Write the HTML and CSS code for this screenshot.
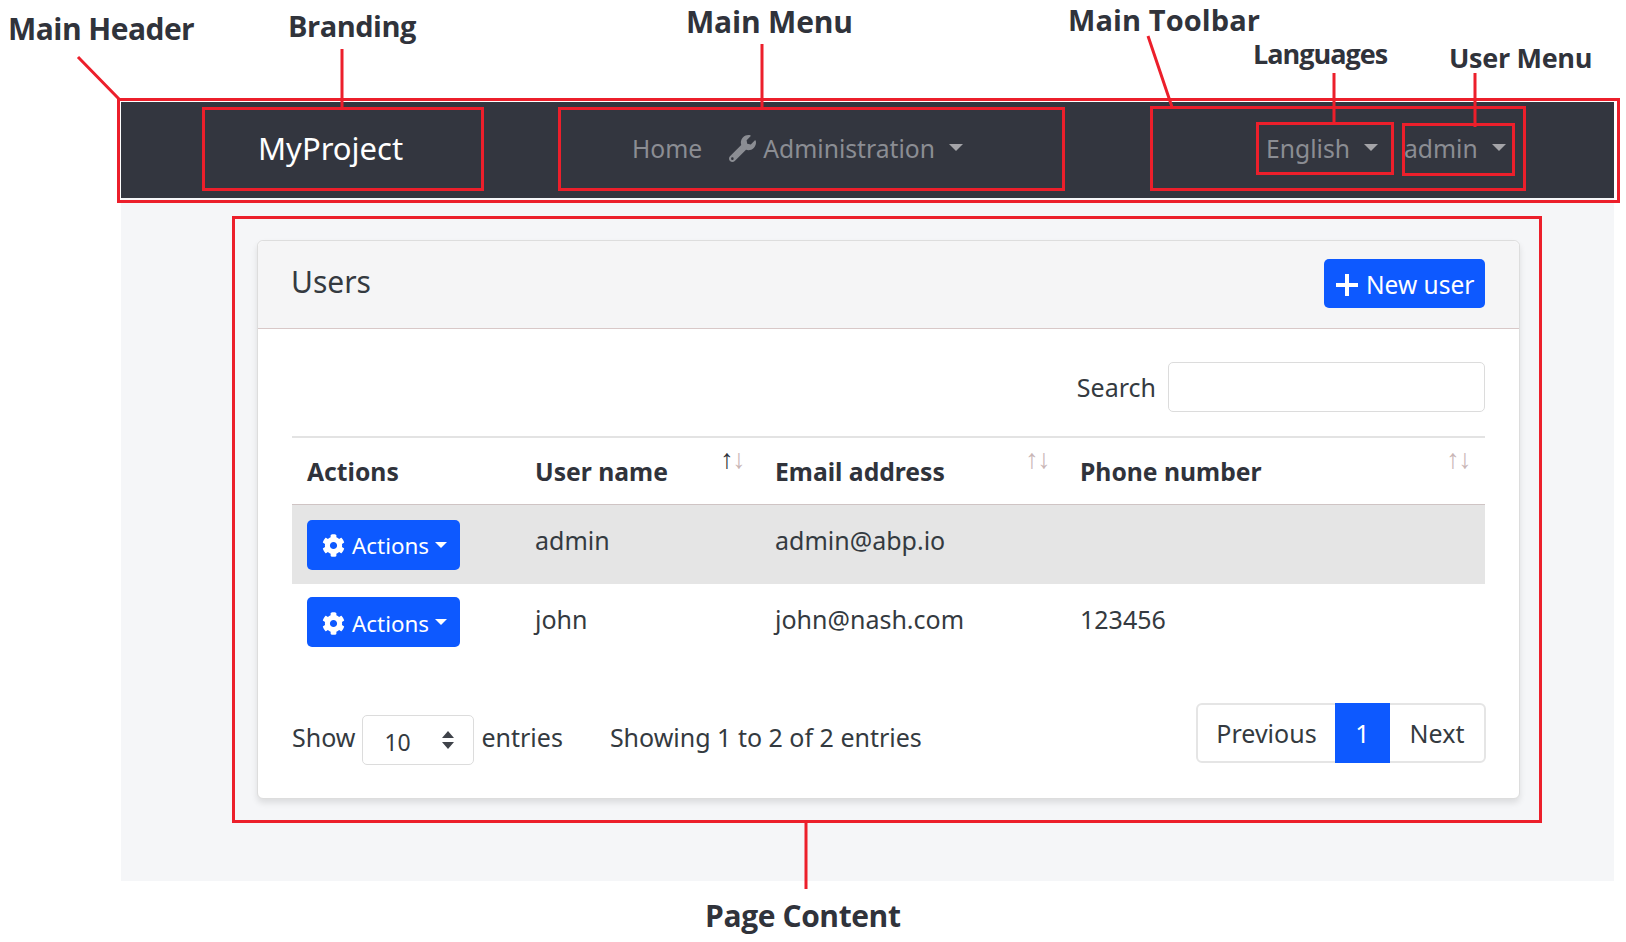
FILE: index.html
```html
<!DOCTYPE html>
<html lang="en">
<head>
<meta charset="utf-8">
<title>Users</title>
<link rel="stylesheet" href="styles.css">
</head>
<body>
<div class="canvas">
  <div class="app">
    <header class="navbar">
      <a class="brand">MyProject</a>
      <nav class="menu">
        <a class="nav-link">Home</a>
        <a class="nav-link admin">
          <svg class="wrench" viewBox="0 0 512 512"><path d="M507.73 109.1c-2.24-9.03-13.54-12.09-20.12-5.51l-74.36 74.36-67.88-11.31-11.31-67.88 74.36-74.36c6.62-6.62 3.43-17.9-5.66-20.16-47.38-11.74-99.55.91-136.58 37.93-39.64 39.64-50.55 97.1-34.05 147.2L18.74 402.76c-24.99 24.99-24.99 65.51 0 90.5 24.99 24.99 65.51 24.99 90.5 0l213.21-213.21c50.12 16.71 107.47 5.68 147.37-34.22 37.07-37.07 49.7-89.32 37.91-136.73zM64 472c-13.25 0-24-10.75-24-24 0-13.26 10.75-24 24-24s24 10.74 24 24c0 13.25-10.75 24-24 24z"/></svg>
          Administration<span class="caret"></span>
        </a>
      </nav>
      <div class="toolbar">
        <a class="nav-link lang">English<span class="caret"></span></a>
        <a class="nav-link user">admin<span class="caret"></span></a>
      </div>
    </header>
    <main class="content">
      <section class="card">
        <div class="card-header">
          <h2 class="card-title">Users</h2>
          <button class="btn btn-new">
            <svg class="plus" viewBox="0 0 24 24"><path d="M10 1h4v9h9v4h-9v9h-4v-9H1v-4h9z"/></svg>
            New user
          </button>
        </div>
        <div class="card-body">
          <div class="search-row">
            <label class="search-label">Search</label>
            <div class="search-input"></div>
          </div>
          <table class="table">
            <colgroup>
              <col class="c1"><col class="c2"><col class="c3"><col class="c4">
            </colgroup>
            <thead>
              <tr>
                <th>Actions</th>
                <th>User name<span class="sort"><i class="on">↑</i><i>↓</i></span></th>
                <th>Email address<span class="sort"><i>↑</i><i>↓</i></span></th>
                <th>Phone number<span class="sort"><i>↑</i><i>↓</i></span></th>
              </tr>
            </thead>
            <tbody>
              <tr class="striped">
                <td><button class="btn btn-act"><svg class="cog" viewBox="0 0 512 512"><path d="M487.4 315.7l-42.6-24.6c4.3-23.2 4.3-47 0-70.2l42.6-24.6c4.9-2.8 7.1-8.6 5.5-14-11.1-35.6-30-67.8-54.7-94.6-3.8-4.1-10-5.1-14.8-2.3L380.8 110c-17.9-15.4-38.5-27.3-60.8-35.1V25.8c0-5.6-3.9-10.5-9.4-11.7-36.7-8.2-74.3-7.8-109.2 0-5.5 1.2-9.4 6.1-9.4 11.7V75c-22.2 7.9-42.8 19.8-60.8 35.1L88.7 85.5c-4.9-2.8-11-1.9-14.8 2.3-24.7 26.7-43.6 58.9-54.7 94.6-1.7 5.4.6 11.2 5.5 14L67.3 221c-4.3 23.2-4.3 47 0 70.2l-42.6 24.6c-4.9 2.8-7.1 8.6-5.5 14 11.1 35.6 30 67.8 54.7 94.6 3.8 4.1 10 5.1 14.8 2.3l42.6-24.6c17.9 15.4 38.5 27.3 60.8 35.1v49.2c0 5.6 3.9 10.5 9.4 11.7 36.7 8.2 74.3 7.8 109.2 0 5.5-1.2 9.4-6.1 9.4-11.7v-49.2c22.2-7.9 42.8-19.8 60.8-35.1l42.6 24.6c4.9 2.8 11 1.9 14.8-2.3 24.7-26.7 43.6-58.9 54.7-94.6 1.5-5.5-.7-11.3-5.6-14.1zM256 336c-44.1 0-80-35.9-80-80s35.9-80 80-80 80 35.9 80 80-35.9 80-80 80z"/></svg>Actions<span class="caret small"></span></button></td>
                <td>admin</td>
                <td>admin@abp.io</td>
                <td></td>
              </tr>
              <tr class="plain">
                <td><button class="btn btn-act"><svg class="cog" viewBox="0 0 512 512"><path d="M487.4 315.7l-42.6-24.6c4.3-23.2 4.3-47 0-70.2l42.6-24.6c4.9-2.8 7.1-8.6 5.5-14-11.1-35.6-30-67.8-54.7-94.6-3.8-4.1-10-5.1-14.8-2.3L380.8 110c-17.9-15.4-38.5-27.3-60.8-35.1V25.8c0-5.6-3.9-10.5-9.4-11.7-36.7-8.2-74.3-7.8-109.2 0-5.5 1.2-9.4 6.1-9.4 11.7V75c-22.2 7.9-42.8 19.8-60.8 35.1L88.7 85.5c-4.9-2.8-11-1.9-14.8 2.3-24.7 26.7-43.6 58.9-54.7 94.6-1.7 5.4.6 11.2 5.5 14L67.3 221c-4.3 23.2-4.3 47 0 70.2l-42.6 24.6c-4.9 2.8-7.1 8.6-5.5 14 11.1 35.6 30 67.8 54.7 94.6 3.8 4.1 10 5.1 14.8 2.3l42.6-24.6c17.9 15.4 38.5 27.3 60.8 35.1v49.2c0 5.6 3.9 10.5 9.4 11.7 36.7 8.2 74.3 7.8 109.2 0 5.5-1.2 9.4-6.1 9.4-11.7v-49.2c22.2-7.9 42.8-19.8 60.8-35.1l42.6 24.6c4.9 2.8 11 1.9 14.8-2.3 24.7-26.7 43.6-58.9 54.7-94.6 1.5-5.5-.7-11.3-5.6-14.1zM256 336c-44.1 0-80-35.9-80-80s35.9-80 80-80 80 35.9 80 80-35.9 80-80 80z"/></svg>Actions<span class="caret small"></span></button></td>
                <td>john</td>
                <td>john@nash.com</td>
                <td>123456</td>
              </tr>
            </tbody>
          </table>
          <div class="table-footer">
            <div class="length">
              <span>Show</span>
              <div class="select"><span class="select-value">10</span>
                <svg class="updown" viewBox="0 0 14 20"><path d="M7 1l6 7H1zM7 19l-6-7h12z"/></svg>
              </div>
              <span>entries</span>
            </div>
            <div class="info">Showing 1 to 2 of 2 entries</div>
            <div class="pagination">
              <a class="page prev">Previous</a>
              <a class="page active">1</a>
              <a class="page next">Next</a>
            </div>
          </div>
        </div>
      </section>
    </main>
  </div>

  <!-- annotation layer drawn over the screenshot -->
  <div class="note-box box-header"></div>
  <div class="note-box box-brand"></div>
  <div class="note-box box-menu"></div>
  <div class="note-box box-toolbar"></div>
  <div class="note-box box-lang"></div>
  <div class="note-box box-user"></div>
  <div class="note-box box-content"></div>
  <svg class="leaders" viewBox="0 0 1626 942">
    <path d="M78 57L119 99M342 49V108M762 44V108M1148 36L1172 107M1334 73V123M1475 73V127M806 822V889"/>
  </svg>
  <span class="note n-header">Main Header</span>
  <span class="note n-brand">Branding</span>
  <span class="note n-menu">Main Menu</span>
  <span class="note n-toolbar">Main Toolbar</span>
  <span class="note n-lang">Languages</span>
  <span class="note n-user">User Menu</span>
  <span class="note n-content">Page Content</span>
</div>
</body>
</html>
```

FILE: styles.css
```css
* { box-sizing: border-box; }
html, body { margin: 0; padding: 0; background: #fff; }
body { font-family: "Noto Sans", "Open Sans", "Liberation Sans", sans-serif; color: #343a40; font-size: 25px; }
.canvas { position: relative; width: 1626px; height: 942px; overflow: hidden; padding: 102px 12px 0 121px; }

.app { width: 1493px; height: 779px; background: #f5f6f8; display: flex; flex-direction: column; }

.navbar { height: 96px; background: #33363f; display: flex; align-items: center; padding: 0 0 4px 137px; }
.brand { color: #fff; font-size: 31px; width: 313px; }
.menu { display: flex; align-items: center; gap: 27px; width: 592px; padding-left: 61px; }
.nav-link { color: #8b8d93; font-size: 24.7px; display: flex; align-items: center; white-space: nowrap; }
.wrench { width: 27px; height: 27px; fill: #8b8d93; margin-right: 7px; }
.caret { display: inline-block; width: 0; height: 0; border-left: 7px solid transparent; border-right: 7px solid transparent; border-top: 7px solid #a4a4a8; margin-left: 14px; margin-top: -2px; }
.toolbar { display: flex; align-items: center; gap: 23px; padding-left: 103px; }
.lang { width: 115px; }
.user { width: 110px; }

.content { padding: 42px 95px 0 136px; }
.card { background: #fff; width: 1263px; height: 559px; border: 1px solid #ddd; border-radius: 6px; box-shadow: 0 4px 6px rgba(0,0,0,.1); display: flex; flex-direction: column; }
.card-header { height: 88px; background: #f5f5f6; border-bottom: 1px solid #d8c8c8; border-radius: 6px 6px 0 0; display: flex; align-items: center; justify-content: space-between; padding: 0 34px 6px 33px; }
.card-title { margin: 0; font-size: 30px; font-weight: 400; color: #343a40; }
.btn { border: 0; background: #0d59ff; color: #fff; font: inherit; display: flex; align-items: center; border-radius: 5px; }
.btn-new { width: 161px; height: 49px; padding: 3px 0 0 11px; font-size: 24.5px; margin-top: 3px; }
.plus { width: 24px; height: 24px; fill: #fff; margin-right: 7px; }

.card-body { padding: 33px 34px 0; flex: 1; }
.search-row { display: flex; align-items: center; justify-content: flex-end; gap: 12px; height: 50px; margin-bottom: 24px; }
.search-input { width: 317px; height: 50px; border: 1.5px solid #dcdcdc; border-radius: 5px; }

.table { width: 100%; border-collapse: collapse; table-layout: fixed; }
.c1 { width: 227px; }
.c2 { width: 240px; }
.c3 { width: 305px; }
.table th { position: relative; height: 67px; border-top: 2px solid #e3e3e3; border-bottom: 1px solid #cfc4c4; text-align: left; font-size: 24.7px; font-weight: 700; padding: 2px 16px 0; color: #30333b; white-space: nowrap; vertical-align: middle; }
.table th:first-child { padding-left: 15px; }
.table td { padding: 18px 16px 0; font-size: 25px; color: #343a40; height: 78px; vertical-align: top; }
.table td:first-child { padding-left: 15px; }
.striped td { height: 80px; }
.striped td:first-child { padding-top: 15px; }
.plain td:first-child { padding-top: 13px; }
.striped { background: #e5e5e5; }
.sort { position: absolute; right: 14px; top: 3px; font-size: 27px; font-weight: 400; line-height: 34px; color: #c9b6b6; display: flex; }
.sort i { font-style: normal; width: 12px; display: flex; justify-content: center; }
.sort i.on { color: #30333b; }

.btn-act { width: 153px; height: 50px; padding: 2px 0 0 15px; font-size: 22.4px; }
.cog { width: 23px; height: 23px; fill: #fff; margin-right: 7px; }
.caret.small { border-left-width: 6px; border-right-width: 6px; border-top: 6px solid #fff; margin-left: 6px; }

.table-footer { display: flex; align-items: center; margin: 47px -1px 0 0; }
.length { display: flex; align-items: center; gap: 7px; }
.select { width: 112px; height: 50px; border: 1.5px solid #dcdcdc; border-radius: 5px; display: flex; align-items: center; justify-content: space-between; padding: 4px 18px 0 21px; font-size: 23px; margin-top: 6px; }
.updown { width: 14px; height: 20px; fill: #3f434a; margin-top: -4px; }
.info { margin-left: 47px; margin-right: auto; }
.pagination { display: flex; height: 60px; border: 2px solid #e5e5e5; border-radius: 6px; margin-top: -9px; }
.page { display: flex; align-items: center; justify-content: center; font-size: 25px; color: #343a40; }
.prev { width: 137px; }
.active { width: 55px; background: #0d59ff; color: #fff; margin: -2px 0; }
.next { width: 94px; }

/* annotations */
.note-box { position: absolute; border: 3px solid #ec1f2b; }
.box-header { left: 117px; top: 98px; width: 1503px; height: 105px; }
.box-brand { left: 202px; top: 107px; width: 282px; height: 84px; }
.box-menu { left: 558px; top: 107px; width: 507px; height: 84px; }
.box-toolbar { left: 1150px; top: 106px; width: 376px; height: 85px; }
.box-lang { left: 1256px; top: 122px; width: 138px; height: 53px; }
.box-user { left: 1402px; top: 123px; width: 113px; height: 53px; }
.box-content { left: 232px; top: 216px; width: 1310px; height: 607px; }
.leaders { position: absolute; left: 0; top: 0; width: 1626px; height: 942px; fill: none; stroke: #ec1f2b; stroke-width: 3px; }
.note { position: absolute; font-family: "Open Sans", "Noto Sans", sans-serif; font-weight: 700; font-size: 30px; line-height: 36px; color: #30333b; white-space: nowrap; }
.n-header { left: 8px; top: 11px; letter-spacing: -.55px; }
.n-brand { left: 288px; top: 8px; font-size: 29px; letter-spacing: -.5px; }
.n-menu { left: 686px; top: 4px; letter-spacing: -.2px; }
.n-toolbar { left: 1068px; top: 2px; font-size: 29px; letter-spacing: .1px; }
.n-lang { left: 1253px; top: 36px; font-size: 27px; letter-spacing: -1px; }
.n-user { left: 1449px; top: 40px; font-size: 27px; letter-spacing: -.3px; }
.n-content { left: 705px; top: 898px; letter-spacing: -.4px; }
```
